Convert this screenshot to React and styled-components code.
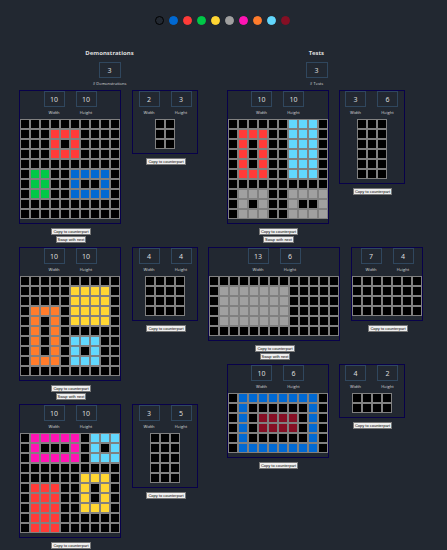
import React, { useState } from "react";
import styled, { createGlobalStyle } from "styled-components";

const GlobalStyle = createGlobalStyle`
  * { box-sizing: border-box; }
  body {
    margin: 0;
    background: #222831;
    color: #dddddd;
    font-family: "Noto Sans", sans-serif;
  }
`;

const colors = [
  "#000000", "#0069d3", "#ff3b38", "#00c847", "#ffd633",
  "#a0a0a0", "#ff14b4", "#ff7c2c", "#62d7fd", "#850f24",
];
const names = ["black", "blue", "red", "green", "yellow", "grey", "magenta", "orange", "cyan", "maroon"];

const Page = styled.main`
  display: flex;
  flex-direction: column;
  align-items: center;
  padding: 16px 5px 0 0;
  height: 100vh;
  overflow: hidden;
`;

const Palette = styled.div`
  display: flex;
  gap: 5px;
  padding-left: 3px;
`;

const Swatch = styled.button`
  width: 9px;
  height: 9px;
  padding: 0;
  border: 1px solid ${(p) => p.$color};
  border-radius: 50%;
  background: ${(p) => (p.$active ? "transparent" : p.$color)};
`;

const Columns = styled.div`
  display: flex;
  align-items: flex-start;
  gap: 10px;
  margin-top: 24px;
`;

const Column = styled.section`
  display: flex;
  flex-direction: column;
  align-items: center;
`;

const Title = styled.h2`
  margin: 0 0 5px;
  padding-left: 2px;
  font-size: 6px;
  line-height: 8px;
  font-weight: 700;
`;

const Field = styled.label`
  display: flex;
  flex-direction: column-reverse;
  align-items: center;
  width: ${(p) => (p.$wide ? "60px" : "21px")};
  padding-left: ${(p) => (p.$wide ? "2px" : "0")};
  font-family: "Open Sans", sans-serif;
  font-size: 4px;
  line-height: 12px;
  white-space: nowrap;
`;

const NumberInput = styled.input`
  width: ${(p) => (p.$wide ? "22px" : "21px")};
  height: 16px;
  padding: 0;
  border: 1px solid #30475e;
  background: transparent;
  color: #dddddd;
  font-family: "Noto Sans", sans-serif;
  font-size: 7px;
  text-align: center;
`;

const Pair = styled.div`
  display: flex;
  align-items: flex-start;
  justify-content: center;
  gap: ${(p) => (p.$tight ? "10px" : "11px")};
`;

const Side = styled.div`
  display: flex;
  flex-direction: column;
  align-items: center;
`;

const Panel = styled.div`
  display: flex;
  flex-direction: column;
  align-items: center;
  min-width: 66px;
  margin-bottom: 4px;
  padding-bottom: 4px;
  border: 1px solid #08014a;
`;

const SizeFields = styled.div`
  display: flex;
  gap: 11px;
`;

const Grid = styled.div`
  display: grid;
  grid-template-columns: repeat(${(p) => p.$columns}, 10px);
  grid-auto-rows: 10px;
`;

const Cell = styled.div`
  border: 1px solid #808080;
  background: ${(p) => p.$color};
`;

const Action = styled.button`
  height: 7px;
  margin: 0 0 1px 2px;
  padding: 0 1px;
  border: 1px solid #777777;
  background: #efefef;
  color: #000000;
  font-family: "Liberation Sans", sans-serif;
  font-size: 4px;
  line-height: 5px;
  white-space: nowrap;
`;

const Row = styled.div`
  margin-bottom: 3px;
`;

const blank = (w, h) => Array.from({ length: h }, () => "0".repeat(w));

const demonstrations = [
  [
    ["0000000000", "0002220000", "0002020000", "0002220000", "0000000000",
     "0330011110", "0330010010", "0330011110", "0000000000", "0000000000"],
    blank(2, 3),
  ],
  [
    ["0000000000", "0000044440", "0000044440", "0777044440", "0707044440",
     "0707000000", "0707088800", "0707080800", "0777088800", "0000000000"],
    blank(4, 4),
  ],
  [
    ["0666660888", "0600060808", "0666660888", "0000000000", "0000004440",
     "0222004040", "0222004040", "0222004440", "0222000000", "0222000000"],
    blank(3, 5),
  ],
];

const tests = [
  [
    ["0000008880", "0222008880", "0202008880", "0202008880", "0202008880",
     "0222008880", "0000000000", "0555005555", "0505005005", "0555005555"],
    blank(3, 6),
  ],
  [
    ["0000000000000", "0555555500000", "0555555500000", "0555555500000",
     "0555555500000", "0000000000000"],
    blank(7, 4),
  ],
  [
    ["0111111110", "0100000010", "0109999010",
     "0109999010", "0100000010", "0111111110"],
    blank(4, 2),
  ],
];

function NumberField({ label, value, wide }) {
  const [current, setCurrent] = useState(String(value));
  return (
    <Field $wide={wide}>
      {label}
      <NumberInput $wide={wide} value={current} onChange={(e) => setCurrent(e.target.value)} />
    </Field>
  );
}

function Board({ rows, swap }) {
  return (
    <Side>
      <Panel>
        <SizeFields>
          <NumberField label="Width" value={rows[0].length} />
          <NumberField label="Height" value={rows.length} />
        </SizeFields>
        <Grid $columns={rows[0].length}>
          {rows.flatMap((row, y) =>
            [...row].map((c, x) => <Cell key={`${x}-${y}`} $color={colors[c]} />)
          )}
        </Grid>
      </Panel>
      <Action type="button">Copy to counterpart</Action>
      {swap && <Action type="button">Swap with next</Action>}
    </Side>
  );
}

function Group({ title, label, examples }) {
  const widest = Math.max(...examples.map(([input]) => input[0].length));
  return (
    <Column>
      <Title>{title}</Title>
      <NumberField label={label} value={examples.length} wide />
      {examples.map(([input, output], i) => (
        <Row key={i}>
          <Pair $tight={input[0].length < widest}>
            <Board rows={input} swap={i < examples.length - 1} />
            <Board rows={output} />
          </Pair>
        </Row>
      ))}
    </Column>
  );
}

export default function App() {
  const [active, setActive] = useState(0);
  return (
    <>
      <GlobalStyle />
      <Page>
        <Palette>
          {colors.map((c, i) => (
            <Swatch key={c} type="button" aria-label={names[i]} $color={c}
              $active={i === active} onClick={() => setActive(i)} />
          ))}
        </Palette>
        <Columns>
          <Group title="Demonstrations" label="# Demonstrations" examples={demonstrations} />
          <Group title="Tests" label="# Tests" examples={tests} />
        </Columns>
      </Page>
    </>
  );
}
